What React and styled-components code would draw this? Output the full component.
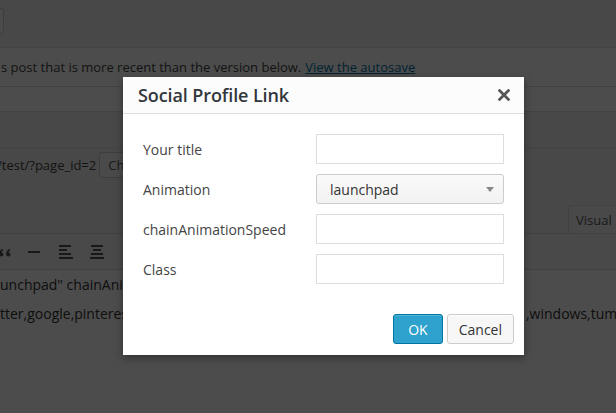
import React from "react";
import styled, { createGlobalStyle } from "styled-components";

// ---------- Global ----------
const GlobalStyle = createGlobalStyle`
  html, body {
    margin: 0;
    padding: 0;
    background: #f1f1f1;
    overflow: hidden;
  }
  * { box-sizing: border-box; }
  body {
    font-family: "Open Sans", "Noto Sans", sans-serif;
    color: #444;
  }
`;

// ---------- Page behind the dialog ----------
const Page = styled.div`
  position: relative;
  width: 616px;
  height: 413px;
  overflow: hidden;
  background: #f1f1f1;
  display: flex;
  flex-direction: column;
`;

const TopBar = styled.div`
  height: 47px;
  padding-top: 8px;
`;

const EdgeButton = styled.div`
  width: 4px;
  height: 26px;
  background: #f7f7f7;
  border: 1px solid #ccc;
  border-left: none;
  border-radius: 0 3px 3px 0;
`;

const Notice = styled.div`
  height: 39px;
  background: #fff;
  border-top: 1px solid #e5e5e5;
  display: flex;
  align-items: center;
  padding-left: 1px;
  font-size: 13px;
  color: #444;
  white-space: nowrap;
  a {
    color: #0074a2;
    text-decoration: underline;
    margin-left: 4px;
  }
`;

const TitleBox = styled.div`
  height: 26px;
  background: #fff;
  border-top: 1px solid #ddd;
  border-bottom: 1px solid #ddd;
`;

const Spacer = styled.div`
  height: ${(p) => p.h}px;
  flex-shrink: 0;
`;

const PermalinkRow = styled.div`
  height: 32px;
  border-top: 1px solid #e0e0e0;
  display: flex;
  align-items: center;
  gap: 3px;
  font-size: 13px;
  white-space: nowrap;
  span {
    margin-left: -3px;
  }
`;

const SmallButton = styled.div`
  height: 26px;
  padding: 0 8px;
  display: flex;
  align-items: center;
  background: #f7f7f7;
  border: 1px solid #ccc;
  border-radius: 3px;
  font-size: 13px;
  color: #555;
`;

const TabsRow = styled.div`
  height: 28px;
  display: flex;
  padding-left: 568px;
`;

const Tab = styled.div`
  height: 28px;
  padding: 0 7px;
  display: flex;
  align-items: center;
  background: #f5f5f5;
  border: 1px solid #dedede;
  border-bottom: none;
  font-size: 13px;
  color: #555;
`;

const Toolbar = styled.div`
  height: 37px;
  background: #f5f5f5;
  border-top: 1px solid #dedede;
  border-bottom: 1px solid #dedede;
  display: flex;
  align-items: center;
  gap: 11px;
  margin-left: -6px;
  color: #555;
`;

const ToolIcon = styled.svg`
  width: 20px;
  height: 20px;
  display: block;
  flex-shrink: 0;
`;

const Content = styled.div`
  flex: 1;
  background: #fff;
  font-size: 14px;
  color: #333;
`;

const ContentLine = styled.div`
  height: 29px;
  display: grid;
  grid-template-columns: 526px 1fr;
  align-items: center;
  white-space: nowrap;
  span {
    overflow: hidden;
  }
`;

// ---------- Overlay + dialog ----------
const Backdrop = styled.div`
  position: absolute;
  inset: 0;
  background: rgba(0, 0, 0, 0.7);
`;

const Dialog = styled.div`
  position: absolute;
  left: 123px;
  top: 77px;
  width: 401px;
  background: #fff;
  box-shadow: 0 3px 8px rgba(0, 0, 0, 0.35);
  display: flex;
  flex-direction: column;
`;

const DialogHeader = styled.div`
  height: 37px;
  background: #fcfcfc;
  border-bottom: 1px solid #dddddd;
  display: flex;
  align-items: center;
  justify-content: space-between;
  padding: 0 14px 0 15px;
`;

const DialogTitle = styled.h1`
  margin: 0;
  font-size: 18px;
  font-weight: 600;
  color: #32373c;
  letter-spacing: -0.1px;
`;

const CloseIcon = styled.svg`
  width: 12px;
  height: 12px;
  display: block;
`;

const DialogBody = styled.div`
  padding: 20px 20px 0 20px;
  display: flex;
  flex-direction: column;
  gap: 10px;
`;

const FieldRow = styled.div`
  height: 30px;
  display: grid;
  grid-template-columns: 173px 188px;
  align-items: center;
`;

const Label = styled.label`
  font-size: 14px;
  color: #444;
`;

const TextInput = styled.input`
  height: 30px;
  width: 188px;
  border: 1px solid #ddd;
  background: #fff;
  padding: 0 8px;
  font-family: inherit;
  font-size: 14px;
  outline: none;
`;

const SelectBox = styled.div`
  height: 30px;
  width: 188px;
  border: 1px solid #ccc;
  border-radius: 3px;
  background: linear-gradient(#fafafa, #f2f2f2);
  display: flex;
  align-items: center;
  justify-content: space-between;
  padding: 0 9px 0 13px;
  font-size: 14px;
  color: #333;
`;

const Caret = styled.span`
  width: 0;
  height: 0;
  border-left: 4px solid transparent;
  border-right: 4px solid transparent;
  border-top: 5px solid #888;
`;

const DialogFooter = styled.div`
  display: flex;
  justify-content: flex-end;
  gap: 4px;
  padding: 30px 10px 11px 0;
`;

const Button = styled.button`
  height: 30px;
  padding: 0 ${(p) => (p.primary ? 14 : 11)}px;
  border-radius: 3px;
  border: 1px solid ${(p) => (p.primary ? "#0074a2" : "#ccc")};
  background: ${(p) => (p.primary ? "#2ea2cc" : "#f7f7f7")};
  color: ${(p) => (p.primary ? "#fff" : "#333")};
  box-shadow: ${(p) =>
    p.primary ? "inset 0 1px 0 rgba(120,200,230,0.5)" : "inset 0 1px 0 #fff"};
  font-family: inherit;
  font-size: 14px;
  cursor: pointer;
`;

// ---------- Icons ----------
const QuoteIcon = () => (
  <ToolIcon viewBox="0 0 20 20" fill="currentColor">
    <path d="M8 7c-2 1-3 3-3 5 0 1.5 1 2.5 2.3 2.5S9.5 13.6 9.5 12.5 8.6 10.6 7.6 10.6c.3-1.2 1-2 2-2.6z" />
    <path d="M15 7c-2 1-3 3-3 5 0 1.5 1 2.5 2.3 2.5s2.2-.9 2.2-2-.9-1.9-1.9-1.9c.3-1.2 1-2 2-2.6z" />
  </ToolIcon>
);

const DashIcon = () => (
  <ToolIcon viewBox="0 0 20 20" fill="currentColor">
    <rect x="3" y="9" width="12" height="2" />
  </ToolIcon>
);

const AlignLeftIcon = () => (
  <ToolIcon viewBox="0 0 20 20" fill="currentColor">
    <rect x="3" y="3" width="12" height="2" />
    <rect x="3" y="7" width="8" height="2" />
    <rect x="3" y="11" width="12" height="2" />
    <rect x="3" y="15" width="14" height="2" />
  </ToolIcon>
);

const AlignCenterIcon = () => (
  <ToolIcon viewBox="0 0 20 20" fill="currentColor">
    <rect x="4" y="3" width="12" height="2" />
    <rect x="6" y="7" width="8" height="2" />
    <rect x="4" y="11" width="12" height="2" />
    <rect x="3" y="15" width="14" height="2" />
  </ToolIcon>
);

// ---------- App ----------
const fields = [
  { label: "Your title", type: "text" },
  { label: "Animation", type: "select", value: "launchpad" },
  { label: "chainAnimationSpeed", type: "text" },
  { label: "Class", type: "text" },
];

export default function App() {
  return (
    <>
      <GlobalStyle />
      <Page>
        <TopBar>
          <EdgeButton />
        </TopBar>
        <Notice>
          s post that is more recent than the version below.
          <a href="#">View the autosave</a>
        </Notice>
        <TitleBox />
        <Spacer h={36} />
        <PermalinkRow>
          <span>/test/?page_id=2</span>
          <SmallButton>Change Permalinks</SmallButton>
        </PermalinkRow>
        <Spacer h={25} />
        <TabsRow>
          <Tab>Visual</Tab>
          <Tab>Text</Tab>
        </TabsRow>
        <Toolbar>
          <QuoteIcon />
          <DashIcon />
          <AlignLeftIcon />
          <AlignCenterIcon />
        </Toolbar>
        <Content>
          <ContentLine>
            <span>unchpad" chainAnimationSpeed="" class=""]</span>
            <span />
          </ContentLine>
          <ContentLine>
            <span>tter,google,pinterest,linkedin,dribbble</span>
            <span>,windows,tumblr</span>
          </ContentLine>
        </Content>

        <Backdrop />

        <Dialog>
          <DialogHeader>
            <DialogTitle>Social Profile Link</DialogTitle>
            <CloseIcon viewBox="0 0 12 12">
              <path
                d="M1.5 1.5 L10.5 10.5 M10.5 1.5 L1.5 10.5"
                stroke="#555"
                strokeWidth="2.8"
                strokeLinecap="round"
              />
            </CloseIcon>
          </DialogHeader>
          <DialogBody>
            {fields.map((f) => (
              <FieldRow key={f.label}>
                <Label>{f.label}</Label>
                {f.type === "select" ? (
                  <SelectBox>
                    {f.value}
                    <Caret />
                  </SelectBox>
                ) : (
                  <TextInput type="text" />
                )}
              </FieldRow>
            ))}
          </DialogBody>
          <DialogFooter>
            <Button primary>OK</Button>
            <Button>Cancel</Button>
          </DialogFooter>
        </Dialog>
      </Page>
    </>
  );
}
